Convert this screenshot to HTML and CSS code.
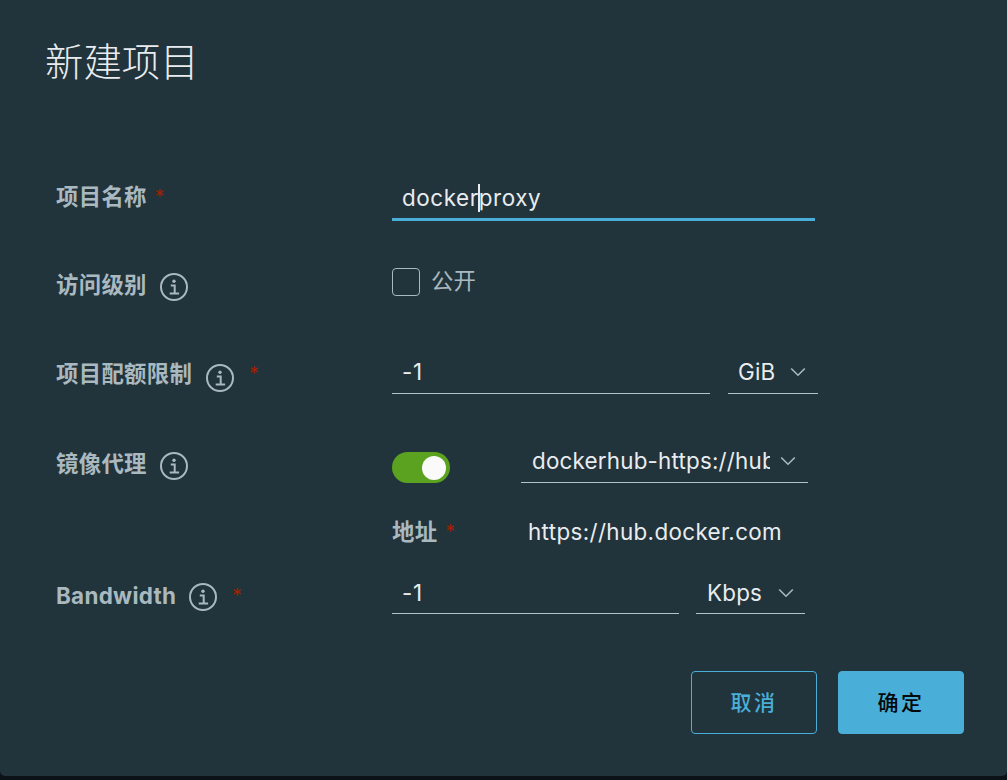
FILE: index.html
```html
<!DOCTYPE html>
<html lang="zh-CN">
<head>
<meta charset="utf-8">
<title>新建项目</title>
<link rel="stylesheet" href="styles.css">
</head>
<body>
<svg class="defs" width="0" height="0" aria-hidden="true">
  <symbol id="info" viewBox="0 0 28 28">
    <circle cx="14" cy="14" r="13" fill="none" stroke="currentColor" stroke-width="2"/>
    <circle cx="14" cy="8.3" r="1.7" fill="currentColor"/>
    <path d="M10.8 12.4h3.9v8M9.7 20.6h9.4" fill="none" stroke="currentColor" stroke-width="2"/>
  </symbol>
  <symbol id="chev" viewBox="0 0 16 10">
    <path d="M1.2 1.5 8 8.2l6.8-6.7" fill="none" stroke="currentColor" stroke-width="1.6"/>
  </symbol>
</svg>
<main class="dialog">
  <h1 class="title">新建项目</h1>
  <form class="form">
    <div class="row row-name">
      <div class="label"><span>项目名称</span><span class="req req-name">*</span></div>
      <div class="field field-active"><span class="value">docker<span class="caret"></span>proxy</span></div>
    </div>
    <div class="row row-access">
      <div class="label"><span>访问级别</span><svg class="info"><use href="#info"/></svg></div>
      <div class="check"><span class="box"></span><span class="check-text">公开</span></div>
    </div>
    <div class="row row-quota">
      <div class="label"><span>项目配额限制</span><svg class="info"><use href="#info"/></svg><span class="req req-far">*</span></div>
      <div class="controls">
        <div class="field w-quota"><span class="value">-1</span></div>
        <div class="select w-gib"><span class="select-text">GiB</span><svg class="chev"><use href="#chev"/></svg></div>
      </div>
    </div>
    <div class="row row-proxy">
      <div class="label"><span>镜像代理</span><svg class="info"><use href="#info"/></svg></div>
      <div class="controls controls-proxy">
        <div class="toggle"><span class="knob"></span></div>
        <div class="select w-proxy"><span class="select-text clip">dockerhub-https://hub.docker.com</span><svg class="chev"><use href="#chev"/></svg></div>
      </div>
    </div>
    <div class="row row-addr">
      <div class="label"></div>
      <div class="addr">
        <div class="label addr-label"><span>地址</span><span class="req req-name">*</span></div>
        <span class="addr-value">https://hub.docker.com</span>
      </div>
    </div>
    <div class="row row-band">
      <div class="label"><span>Bandwidth</span><svg class="info"><use href="#info"/></svg><span class="req req-band">*</span></div>
      <div class="controls">
        <div class="field w-band"><span class="value">-1</span></div>
        <div class="select w-kbps"><span class="select-text">Kbps</span><svg class="chev"><use href="#chev"/></svg></div>
      </div>
    </div>
  </form>
  <div class="actions">
    <button type="button" class="btn btn-outline">取消</button>
    <button type="button" class="btn btn-solid">确定</button>
  </div>
</main>
</body>
</html>
```
FILE: styles.css
```css
* { box-sizing: border-box; }
html, body { margin: 0; height: 100%; }
body {
  background: #0c1316;
  font-family: "Inter", "Noto Sans CJK SC", sans-serif;
  overflow: hidden;
}
.defs { position: absolute; }
.dialog {
  width: 1007px;
  height: 776px;
  background: #21333b;
  border-radius: 0 0 5px 5px;
  padding: 35px 43px 0 45px;
}
.title {
  margin: 0;
  height: 48px;
  font-family: "Noto Sans CJK SC", sans-serif;
  font-weight: 200;
  font-size: 38.4px;
  line-height: 48px;
  color: #e9ecef;
}
.form { margin-top: 92px; padding-left: 11px; }
.row { display: grid; grid-template-columns: 336px 1fr; align-items: start; }
.label {
  display: flex;
  align-items: center;
  font-family: "Noto Sans CJK SC", sans-serif;
  font-weight: 700;
  font-size: 22.4px;
  letter-spacing: 0.3px;
  line-height: 30px;
  height: 30px;
  color: #a9b9bf;
}
.label span:first-child { font-family: "Inter", "Noto Sans CJK SC", sans-serif; }
.info { width: 28px; height: 28px; margin: 3px 0 0 13px; color: #a9b9bf; flex: none; }
.req { color: #a32100; font-size: 19px; font-weight: 400; font-family: "Inter", sans-serif; }
.req-name { margin-left: 8px; }
.req-far { margin-left: 15px; }
.req-band { margin-left: 15px; }
.row-name { height: 46px; }
.row-name .label { margin-top: 7px; }
.row-access { height: 52px; margin-top: 47px; }
.row-access .label { margin-top: 2px; }
.row-quota { height: 45px; margin-top: 29px; }
.row-quota .label { margin-top: 10px; }
.row-quota .info { margin: 7px 0 0 14px; }
.row-proxy { height: 40px; margin-top: 58px; }
.row-proxy .label { margin-top: -3px; }
.row-addr { height: 40px; margin-top: 25px; }
.row-band { height: 47px; margin-top: 12px; }
.row-band .label { margin-top: 12px; }
.row-band .info { margin-top: 1px; }
.field {
  height: 45px;
  border-bottom: 1px solid #b3c2c8;
  padding: 8px 0 0 10px;
}
.field-active { width: 423px; height: 46px; border-bottom: 3px solid #49afd9; }
.w-band { padding-top: 9px; }
.value, .select-text, .addr-value {
  font-size: 22.4px;
  line-height: 30px;
  color: #e9ecef;
}
.value { display: block; height: 30px; white-space: nowrap; letter-spacing: 0.6px; }
.addr-value { letter-spacing: 0.36px; }
.select-text { letter-spacing: 0.2px; }
.caret {
  display: inline-block;
  width: 2px;
  height: 28px;
  margin: 0 -1px;
  vertical-align: -6px;
  background: #e9ecef;
}
.check { display: flex; align-items: center; height: 28px; }
.box { width: 28px; height: 28px; border: 1px solid #a9b9bf; border-radius: 4px; }
.check-text {
  margin: -6px 0 0 11px;
  font-family: "Noto Sans CJK SC", sans-serif;
  font-size: 22.4px;
  color: #a9b9bf;
}
.controls { display: flex; align-items: flex-start; }
.select {
  display: flex;
  align-items: flex-start;
  height: 45px;
  border-bottom: 1px solid #b3c2c8;
  padding: 8px 0 0 10px;
}
.w-quota { width: 318px; }
.w-gib { width: 90px; margin-left: 18px; }
.w-gib .chev { margin-left: 15px; }
.w-band { width: 287px; }
.w-kbps { width: 109px; margin-left: 17px; padding: 9px 0 0 11px; }
.w-kbps .chev { margin-left: 16px; }
.chev { width: 16px; height: 10px; margin-top: 10px; color: #a9b9bf; flex: none; }
.controls-proxy { align-items: flex-start; }
.toggle {
  width: 58px;
  height: 31px;
  border-radius: 16px;
  background: #5aa220;
  display: flex;
  align-items: center;
  justify-content: flex-end;
  padding-right: 4px;
}
.knob { width: 24px; height: 24px; border-radius: 50%; background: #fafafa; }
.w-proxy { width: 287px; height: 31px; margin-left: 71px; padding: 0 0 0 11px; }
.w-proxy .chev { margin: 4px 0 0 10px; }
.clip { width: 238px; margin-top: -6px; overflow: hidden; white-space: nowrap; }
.addr { display: flex; align-items: center; height: 30px; }
.addr-label { width: 136px; }
.actions { display: flex; justify-content: flex-end; gap: 21px; margin-top: 55px; }
.btn {
  width: 126px;
  height: 63px;
  padding: 0 0 3px;
  border-radius: 4px;
  font-family: "Noto Sans CJK SC", sans-serif;
  font-size: 21px;
  font-weight: 500;
  letter-spacing: 2.5px;
  cursor: pointer;
}
.btn-outline { background: transparent; border: 1px solid #49afd9; color: #49afd9; }
.btn-solid { background: #49afd9; border: 1px solid #49afd9; color: #04090b; }
```
